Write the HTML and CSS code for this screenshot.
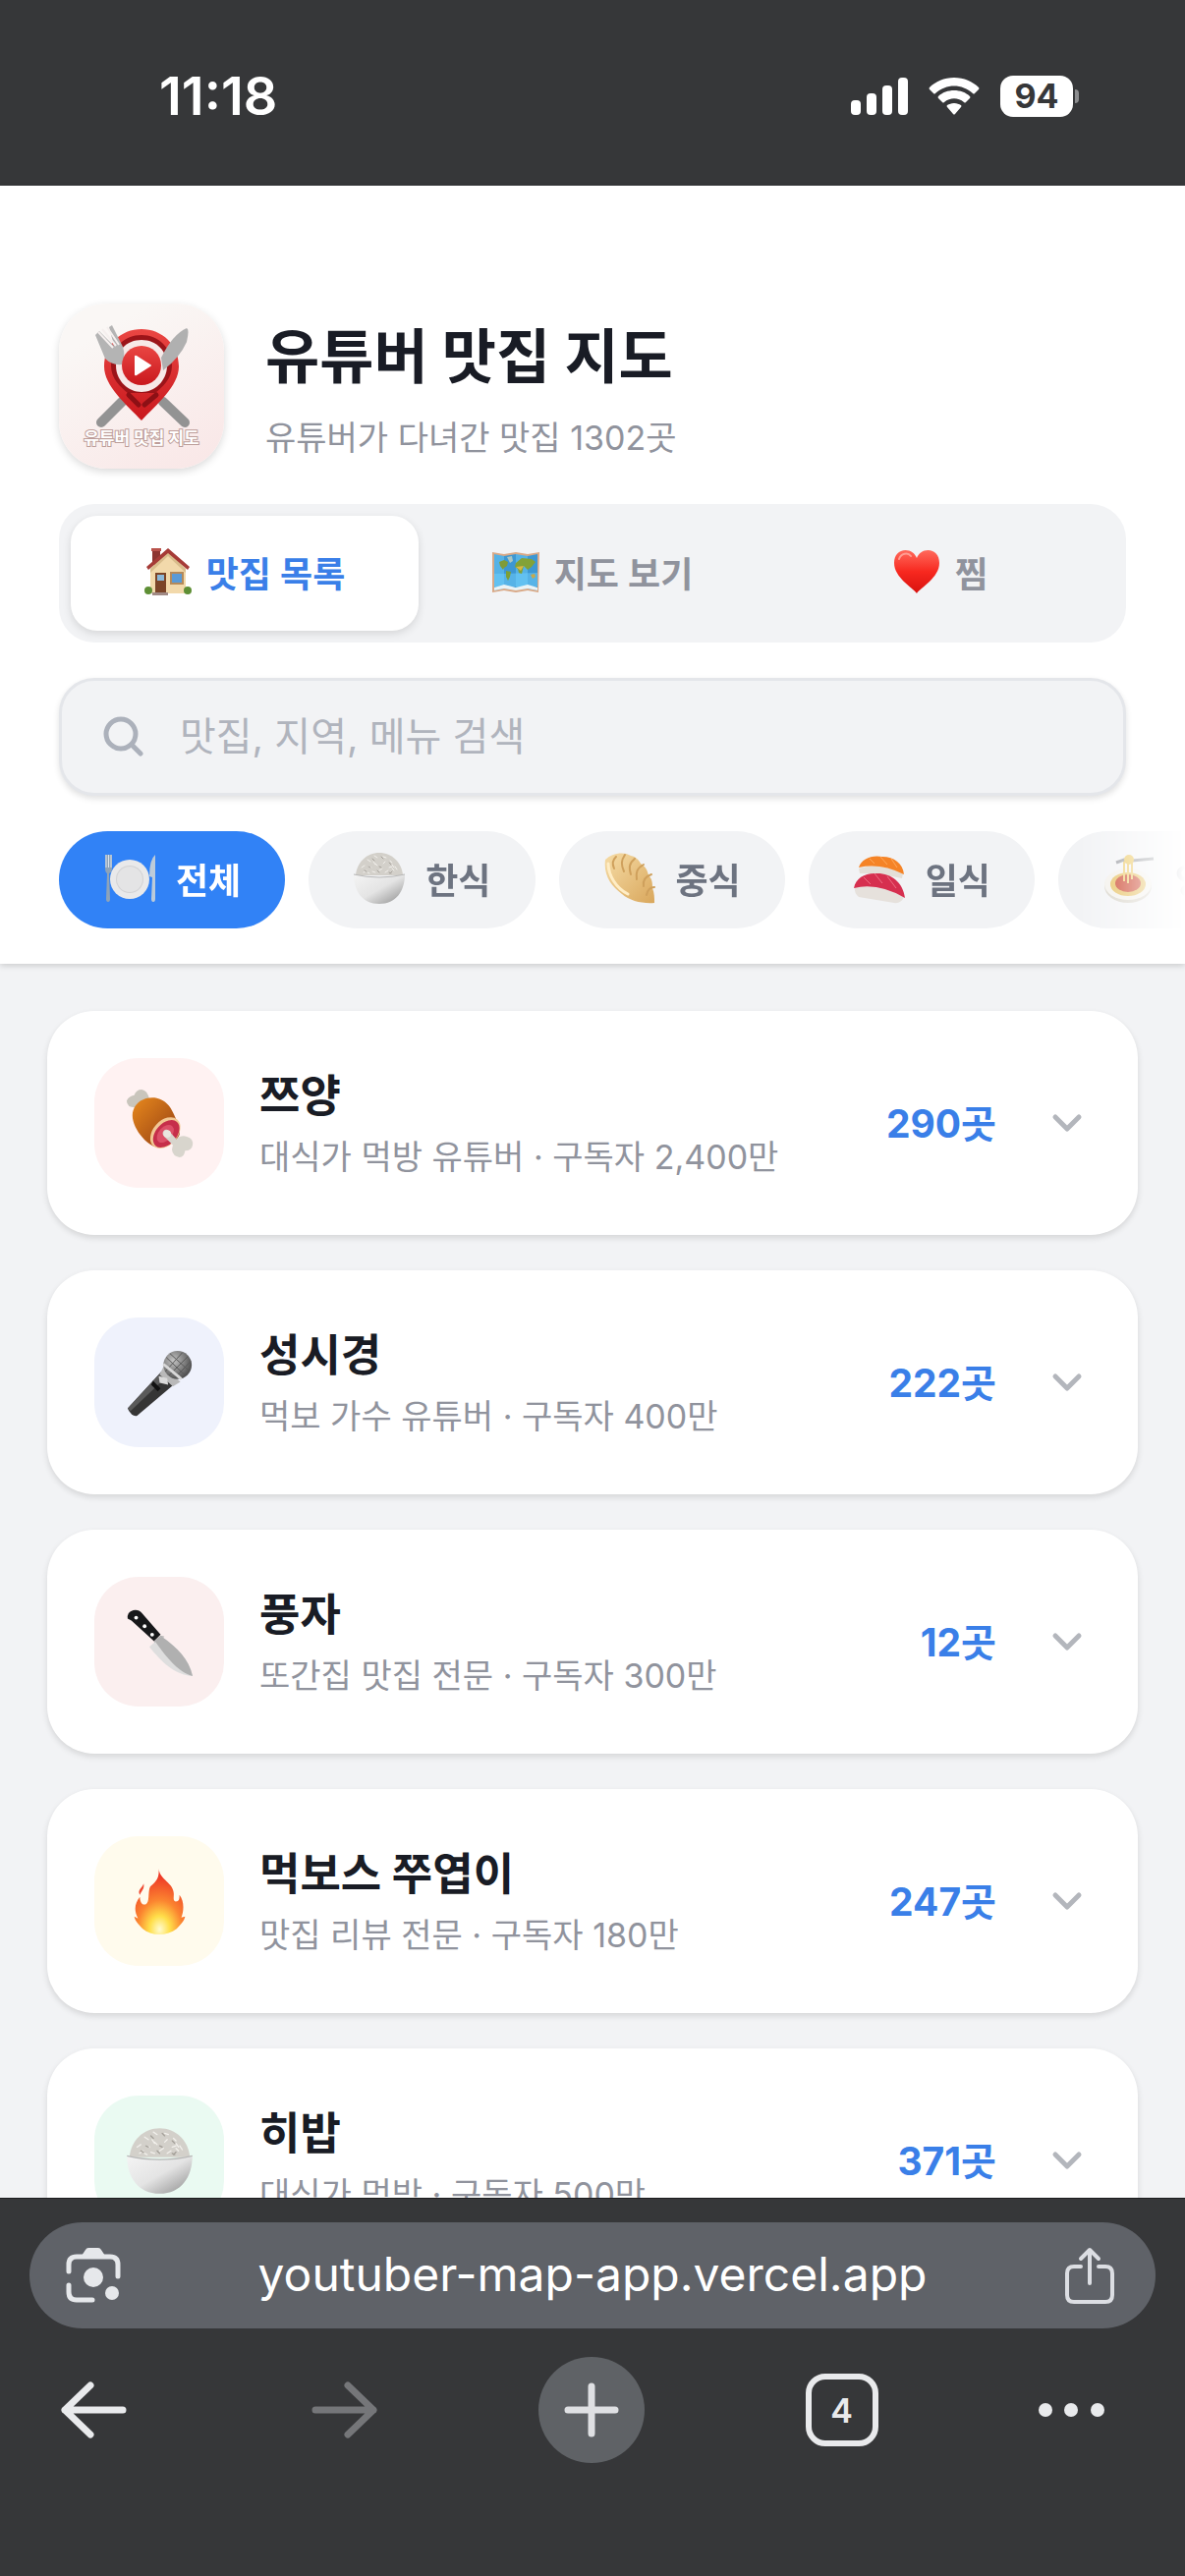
FILE: index.html
```html
<!DOCTYPE html>
<html lang="ko">
<head>
    <meta charset="UTF-8">
    <meta name="viewport" content="width=device-width, initial-scale=1.0">
    <title>유튜버 맛집 지도</title>
    <link rel="stylesheet" href="styles.css">
</head>
<body>
    <!-- shared pictures -->
    <svg class="sprite" aria-hidden="true">
        <defs>
            <linearGradient id="g-bowl" x1="0" y1="0" x2="1" y2="1">
                <stop offset="0" stop-color="#f4f4f4"/><stop offset=".5" stop-color="#e4e4e4"/><stop offset="1" stop-color="#8d8d8d"/>
            </linearGradient>
            <linearGradient id="g-dough" x1="0" y1="0" x2="1" y2="1">
                <stop offset="0" stop-color="#f6dca6"/><stop offset="1" stop-color="#d9a75c"/>
            </linearGradient>
            <linearGradient id="g-meat" x1="0" y1="0" x2="1" y2="1">
                <stop offset="0" stop-color="#e8891d"/><stop offset="1" stop-color="#8f3a12"/>
            </linearGradient>
            <linearGradient id="g-heart" x1="0" y1="0" x2="0" y2="1">
                <stop offset="0" stop-color="#ff6a5c"/><stop offset=".5" stop-color="#f7281f"/><stop offset="1" stop-color="#d8120f"/>
            </linearGradient>
            <radialGradient id="g-fire" cx=".5" cy=".92" r=".8">
                <stop offset="0" stop-color="#fffbd0"/><stop offset=".25" stop-color="#ffdf4a"/><stop offset=".55" stop-color="#fb8530"/><stop offset="1" stop-color="#ee3a27"/>
            </radialGradient>
            <radialGradient id="g-mic" cx=".35" cy=".35" r=".7">
                <stop offset="0" stop-color="#c4c4c4"/><stop offset="1" stop-color="#4d4d4d"/>
            </radialGradient>
            <linearGradient id="g-pin" x1="0" y1="0" x2="0" y2="1">
                <stop offset="0" stop-color="#ea4643"/><stop offset="1" stop-color="#c9181d"/>
            </linearGradient>
        </defs>
        <symbol id="house" viewBox="0 0 48 48">
            <path d="M8 1h8v16H8z" fill="#8d3531"/>
            <path d="M24 3 42 21v25H6V21z" fill="#f2d9ab"/>
            <path d="M24 3 42 21v4L24 8 6 25v-4z" fill="#d9bd8c"/>
            <path d="M24 0 2 19l2 3L24 5l20 17 2-3z" fill="#a63b37"/>
            <path d="M7 0h10v3H7z" fill="#b9524b"/>
            <path d="M11 25h11v21H11z" fill="#7b4427"/>
            <path d="M13 27h7v6h-7z" fill="#8db8d8"/>
            <path d="M26 24h14v13H26z" fill="#b58a5a"/>
            <path d="M28 26h10v9H28z" fill="#5a9ad6"/>
            <circle cx="4" cy="43" r="4" fill="#5e8f35"/><circle cx="44" cy="43" r="4" fill="#5e8f35"/>
            <path d="M8 45h16v3H8z" fill="#a08a85"/>
        </symbol>
        <symbol id="map" viewBox="0 0 48 48">
            <path d="m0 4 12 2 12-2 12 2 12-2-1 41-11-2-12 2-12-2-12 2z" fill="#d9a987"/>
            <path d="m2 6 10 2v33l-10 2z" fill="#55b2e6"/><path d="m12 8 12-2v36l-12-1z" fill="#3d97d3"/>
            <path d="m24 6 12 2v33l-12 1z" fill="#55b2e6"/><path d="m36 8 10-2v37l-10-2z" fill="#3d97d3"/>
            <path d="m2 26 44-1v14H2z" fill="#6fd0fb" opacity=".5"/>
            <path d="m7 14 5-2 4 2-1 4-3 2-1 2-3-4z" fill="#7f9b3a"/>
            <path d="m15 9 5-1 1 5-3 2z" fill="#a9c6c4"/>
            <path d="m14 23 5 1-1 5-2 4-2-4z" fill="#7e9f35"/>
            <path d="m24 15 6-5 10 1 4 3-4 5-4 3-4-4-2 8-3-1-1-4-3-2z" fill="#82a238"/>
            <path d="m24 19 8-1-3 5z" fill="#d9b743"/>
            <path d="m39 27 4-1 1 3-3 2z" fill="#c8a94a"/>
            <path d="m2 40 10-3 12 3 12-3 10 3v3l-10-2-12 2-12-2-10 2z" fill="#e9f3f6"/>
        </symbol>
        <symbol id="heart" viewBox="0 0 48 48">
            <path d="M24 46C20 40 1 30 1 15 1 7 6 2 12.500 2 18 2 22 5 24 10 26 5 30 2 35.500 2 42 2 47 7 47 15c0 15-19 25-23 31z" fill="url(#g-heart)"/>
            <path d="M6 11c2-6 9-7 12-3" fill="none" stroke="#ff9d92" stroke-width="2" stroke-linecap="round"/>
        </symbol>
        <symbol id="plate" viewBox="0 0 54 54">
            <path d="M2 3v14q0 4 2 5l-1 26q0 3 2 3t2-3L6 22q3-1 3-5V3" fill="#8ea3b8"/>
            <path d="M3 3v13M5.500 3v13M8 3v13" stroke="#dbe4ee"/>
            <circle cx="27" cy="28" r="20" fill="#e9e9ea"/>
            <circle cx="27" cy="28" r="14" fill="#d2d2d4"/><circle cx="27" cy="28" r="13" fill="#e4e4e5"/>
            <path d="M53 3q-6 5-6 22l3 1-1 22q0 3 2 3t2-3z" fill="#bccbd9"/>
        </symbol>
        <symbol id="rice" viewBox="0 0 54 54">
            <path d="M3 24C4 11 14 1 27 1s23 10 24 23z" fill="#d3d0ca"/>
            <path d="m9 16 3-2m3-6 3 2m4-6 3 2m6-1 3 1m4 3 2 2m3 4 2 3M16 15l3 1m4-4 2 2m6-2 2-2m4 6 3-1m-29 6 3-2m6 1 3 1m4-2 3-2m3 4 3-2m4-2 2 2m-21-9 2 3m-8 8 2 1m23-9 2 3" stroke="#f2f0ec" stroke-linecap="round"/>
            <path d="m12 19 2 1m6-13 2 2m7-4 2 2m6 4 2 2m-14 6 2 2m10 0 2 1m-23-7 2 1m9-1 2 1m9 6 2-2" stroke="#a39f98" stroke-linecap="round"/>
            <path d="M1 23q26 6 52 0c0 17-9 30-26 30S1 40 1 23z" fill="url(#g-bowl)"/>
            <path d="M1 23q26 6 52 0" fill="none" stroke="#b7b7b7"/>
        </symbol>
        <symbol id="dumpling" viewBox="0 0 54 54">
            <path d="M2 8C8 2 20-1 28 4c5 1 8 4 10 8 5 3 7 7 8 12 4 4 4 8 4 13 2 5 2 10 2 15-12 1-25-2-33-9C8 35 0 24 2 8z" fill="url(#g-dough)"/>
            <path d="M13 5c-4 4-4 7-2 12m11-14c-4 6-4 10-1 17m11-13c-6 5-6 9-4 16m13-10c-7 4-8 8-7 15m15-5c-6 2-9 6-8 12m11 1c-5 0-7 3-8 8" fill="none" stroke="#cfa05c" stroke-width="2" stroke-linecap="round"/>
            <path d="M5 12c0 12 8 25 20 31" fill="none" stroke="#ffedc5" stroke-width="3" stroke-linecap="round"/>
        </symbol>
        <symbol id="sushi" viewBox="0 0 54 54">
            <path d="M6 17q20-7 45 5l-1 5q-23-5-43-5z" fill="#e4dfd8"/>
            <path d="M6 16C9 7 19 3 30 5c12 0 21 7 22 18Q28 11 6 16z" fill="#f58326"/>
            <path d="m17 7 5 5m6-7 7 8m4-6 6 9" stroke="#ffa95a"/>
            <path d="M2 36q22-4 50 10-3 7-10 6L6 46q-5-4-4-10z" fill="#e6e1dc"/>
            <path d="M1 37c2-11 12-16 24-15 14 0 26 9 28 25Q25 31 1 37z" fill="#d62f4f"/>
            <path d="m11 26 7 7m4-11 8 10m5-7 9 12" stroke="#ee6f84"/>
        </symbol>
        <symbol id="pasta" viewBox="0 0 54 54">
            <ellipse cx="26" cy="35" rx="24" ry="17" fill="#d7d3c8"/>
            <ellipse cx="26" cy="33" rx="24" ry="16" fill="#f2f0ea"/>
            <ellipse cx="26" cy="33" rx="18" ry="12" fill="#e5bd59"/>
            <ellipse cx="26" cy="32" rx="13" ry="9" fill="#c83a22"/>
            <path d="M22 8v22m4-22v24m4-24v20" stroke="#ecc968" stroke-width="2"/>
            <path d="m14 11 8-3 8 1 22-2" fill="none" stroke="#96999e" stroke-width="3"/>
            <circle cx="27" cy="8" r="5" fill="#ebc75f"/>
        </symbol>
        <symbol id="meat" viewBox="0 0 72 72">
            <path d="m10 19 12 4 3-13q-2-9-8-10-6 0-8 6-6 1-8 6 0 7 9 7z" fill="#c9c5bc"/>
            <path d="M8 22C11 12 22 7 33 9c9 2 14 8 18 17 3 7 7 13 6 22-3 8-15 14-25 13C20 58 3 36 8 22z" fill="url(#g-meat)"/>
            <ellipse cx="42" cy="46" rx="19" ry="13" transform="rotate(-48 42 46)" fill="#f2c894"/>
            <ellipse cx="43" cy="47" rx="17" ry="11" transform="rotate(-48 43 47)" fill="#c62f4a"/>
            <ellipse cx="42" cy="47" rx="11" ry="7" transform="rotate(-48 42 47)" fill="#dc5068"/>
            <path d="M40 44q3-3 6 0l8 9q4-5 11-3 7 2 6 9-1 6-8 6-1 7-6 7-7-1-8-8l1-5-9-9q-3-3-1-6z" fill="#d8d5cd"/>
            <circle cx="44" cy="47" r="4" fill="#eae7e0"/>
        </symbol>
        <symbol id="mic" viewBox="0 0 72 72">
            <path d="m38 24 14 13L12 71q-3 1-6-2t-4-6z" fill="#353535"/>
            <path d="M38 24 2 63l3 3 39-37z" fill="#5a5a5a"/>
            <path d="m36 27 4-8 18 16-8 5z" fill="#b9b9b9"/>
            <circle cx="55" cy="17" r="15" fill="url(#g-mic)"/>
            <path d="m43 9 20 19M47 5l20 18M41 15l17 16M42 24 60 4M46 28 66 8M52 31l17-18" stroke="#575757" fill="none"/>
            <path d="m40 16 19 16" stroke="#d8d8d8" stroke-width="3"/>
            <path d="m35 29 9 2 1 7-9-2z" fill="#dadada"/><path d="m29 34 8 8-3 3-7-7z" fill="#111"/>
        </symbol>
        <symbol id="knife" viewBox="0 0 72 72">
            <path d="M2 11Q1 4 8 2q6-1 9 3l20 23-7 7L6 13z" fill="#17181a"/>
            <circle cx="11" cy="10" r="2" fill="#fff"/><circle cx="20" cy="19" r="2" fill="#fff"/><circle cx="28" cy="28" r="2" fill="#fff"/>
            <path d="m30 35 7-6 4 1-10 10z" fill="#b0b0b0"/>
            <path d="m25 41 13-11C55 42 67 54 71 72 52 71 38 57 25 41z" fill="#dedede"/>
            <path d="M31 35 38 30C55 42 67 54 71 72 54 67 42 50 31 35z" fill="#b0b0b0"/>
        </symbol>
        <symbol id="fire" viewBox="0 0 72 72">
            <path d="M35 1c1 12 16 15 16 27 0 4-1 7 2 8 4 0 4-3 4-7 5 6 5 16 2 24l4-1c-1 5-5 9-9 13-10 8-27 8-36 0-4-4-8-8-9-13l4 2C8 45 10 37 15 31c0 5 2 9 6 8 5-2 2-13 5-19 4-4 10-7 9-19z" fill="url(#g-fire)"/>
            <path d="M19 17c1 6-2 7-4 12-3-5 2-7 4-12z" fill="#ef4a32"/>
        </symbol>
        <symbol id="chevron" viewBox="0 0 48 48">
            <path d="m12 18 12 12 12-12" fill="none" stroke="#b3b6bc" stroke-width="5" stroke-linecap="round" stroke-linejoin="round"/>
        </symbol>
    </svg>

    <div class="status-bar">
        <span class="time">11:18</span>
        <div class="status-icons">
            <svg width="58" height="38" viewBox="0 0 58 38" fill="#fff"><rect y="23" width="10" height="15" rx="4"/><rect x="16" y="16" width="10" height="22" rx="4"/><rect x="32" y="8" width="10" height="30" rx="4"/><rect x="48" width="10" height="38" rx="4"/></svg>
            <svg width="52" height="38" viewBox="0 0 52 38" fill="#fff"><path d="M26 0C16 0 7 4 1 10q-1 1 0 2l4 4q1 1 2 0c11-10 27-10 38 0q1 1 2 0l4-4q1-1 0-2C45 4 36 0 26 0z"/><path d="M26 13c-6 0-12 2-16 6q-1 1 0 2l4 4q1 1 2 0c6-5 14-5 20 0q1 1 2 0l4-4q1-1 0-2c-4-4-10-6-16-6z"/><path d="M26 26c-3 0-5 1-7 2q-1 1 0 2l6 7q1 1 2 0l6-7q1-1 0-2c-2-1-4-2-7-2z"/></svg>
            <span class="battery">94</span>
        </div>
    </div>

    <header class="header">
        <div class="brand">
            <svg class="logo" viewBox="0 0 168 168" role="img" aria-label="유튜버 맛집 지도 로고">
                <path d="M43 121 64 100M128 121 106 100" stroke="#939393" stroke-width="10" stroke-linecap="round"/>
                <path d="M84 26c-21 0-38 16-38 38 0 20 23 39 38 55 15-16 38-35 38-55 0-22-17-38-38-38z" fill="url(#g-pin)"/>
                <path d="M84 32c-17 0-31 13-31 31 0 14 10 22 17 28h28c7-6 17-14 17-28 0-18-14-31-31-31z" fill="#9c1419"/>
                <path d="M84 37c-15 0-26 11-26 26 0 16 13 27 26 27s26-11 26-27c0-15-11-26-26-26z" fill="#f7e9e8"/>
                <path d="m71 93 10 10m6 0 12-10" stroke="#8d1015" stroke-width="5" stroke-linecap="round"/>
                <path d="m37 32 4-4 15 15-5-19 3-2 11 22q3 9-1 18-10 1-17-6z" fill="#b4b4b4"/>
                <path d="m40 29 15 16m-11-19 14 17m-9-19 12 18" stroke="#f5efee" stroke-width="2"/>
                <path d="M130 25q3 1 0 14-7 16-24 29l-2-13q12-24 26-30z" fill="#b0b0b0"/>
                <circle cx="84" cy="63" r="20" fill="url(#g-pin)"/>
                <path d="M77 54v18q0 2 2 1l14-9q2-1 0-2l-14-9q-2-1-2 1z" fill="#fff"/>
                <text x="84" y="143" text-anchor="middle" class="logo-text">유튜버 맛집 지도</text>
            </svg>
            <div class="brand-text">
                <h1>유튜버 맛집 지도</h1>
                <p>유튜버가 다녀간 맛집 1302곳</p>
            </div>
        </div>

        <nav class="tabs">
            <button class="tab active"><svg class="tab-icon"><use href="#house"/></svg>맛집 목록</button>
            <button class="tab"><svg class="tab-icon"><use href="#map"/></svg>지도 보기</button>
            <button class="tab"><svg class="tab-icon"><use href="#heart"/></svg>찜</button>
        </nav>

        <label class="search">
            <svg width="42" height="42" viewBox="0 0 42 42" fill="none" stroke="#acb1bb" stroke-width="5" stroke-linecap="round"><circle cx="18" cy="18" r="15"/><path d="m29 29 9 9"/></svg>
            <input type="search" placeholder="맛집, 지역, 메뉴 검색" aria-label="맛집, 지역, 메뉴 검색">
        </label>

        <div class="chips">
            <button class="chip active"><svg class="chip-icon"><use href="#plate"/></svg>전체</button>
            <button class="chip"><svg class="chip-icon"><use href="#rice"/></svg>한식</button>
            <button class="chip"><svg class="chip-icon"><use href="#dumpling"/></svg>중식</button>
            <button class="chip"><svg class="chip-icon"><use href="#sushi"/></svg>일식</button>
            <button class="chip"><svg class="chip-icon"><use href="#pasta"/></svg>양식</button>
        </div>
    </header>

    <main class="list">
        <button class="card">
            <span class="avatar pink"><svg><use href="#meat"/></svg></span>
            <span class="info"><strong>쯔양</strong><small>대식가 먹방 유튜버 · 구독자 2,400만</small></span>
            <span class="count">290곳</span>
            <svg class="chevron"><use href="#chevron"/></svg>
        </button>
        <button class="card">
            <span class="avatar blue"><svg><use href="#mic"/></svg></span>
            <span class="info"><strong>성시경</strong><small>먹보 가수 유튜버 · 구독자 400만</small></span>
            <span class="count">222곳</span>
            <svg class="chevron"><use href="#chevron"/></svg>
        </button>
        <button class="card">
            <span class="avatar red"><svg><use href="#knife"/></svg></span>
            <span class="info"><strong>풍자</strong><small>또간집 맛집 전문 · 구독자 300만</small></span>
            <span class="count">12곳</span>
            <svg class="chevron"><use href="#chevron"/></svg>
        </button>
        <button class="card">
            <span class="avatar yellow"><svg><use href="#fire"/></svg></span>
            <span class="info"><strong>먹보스 쭈엽이</strong><small>맛집 리뷰 전문 · 구독자 180만</small></span>
            <span class="count">247곳</span>
            <svg class="chevron"><use href="#chevron"/></svg>
        </button>
        <button class="card">
            <span class="avatar green"><svg><use href="#rice"/></svg></span>
            <span class="info"><strong>히밥</strong><small>대식가 먹방 · 구독자 500만</small></span>
            <span class="count">371곳</span>
            <svg class="chevron"><use href="#chevron"/></svg>
        </button>
    </main>

    <footer class="browser-bar">
        <div class="address">
            <button aria-label="이미지 검색">
                <svg width="58" height="58" viewBox="0 0 58 58" fill="none" stroke="#e6e8eb" stroke-width="5" stroke-linecap="round"><path d="M4 25v-7q0-8 8-8h34q8 0 8 8v12M4 39v7q0 8 8 8h16"/><path d="m17 9 4-6q1-2 3-2h10q2 0 3 2l4 6z" fill="#e6e8eb" stroke="none"/><circle cx="29" cy="31" r="10" fill="#e6e8eb" stroke="none"/><circle cx="48" cy="47" r="7" fill="#e6e8eb" stroke="none"/></svg>
            </button>
            <a href="#">youtuber-map-app.vercel.app</a>
            <button aria-label="공유">
                <svg width="58" height="58" viewBox="0 0 58 58" fill="none" stroke="#dcdee3" stroke-width="4" stroke-linecap="round" stroke-linejoin="round"><path d="M18 20h-7q-7 0-7 7v22q0 7 7 7h32q7 0 7-7V27q0-7-7-7h-7M27 37V4M18 12l9-9 9 9"/></svg>
            </button>
        </div>
        <nav class="toolbar">
            <button class="back" aria-label="뒤로"><svg width="68" height="58" viewBox="0 0 68 58" fill="none" stroke="#e9eaec" stroke-width="7" stroke-linecap="round" stroke-linejoin="round"><path d="M31 4 5 29l26 25M5 29h59"/></svg></button>
            <button aria-label="앞으로" disabled><svg width="68" height="58" viewBox="0 0 68 58" fill="none" stroke="#757679" stroke-width="7" stroke-linecap="round" stroke-linejoin="round"><path d="m37 4 26 25-26 25M63 29H4"/></svg></button>
            <button class="new-tab" aria-label="새 탭"><svg width="56" height="56" viewBox="0 0 56 56" stroke="#dfe0e3" stroke-width="7" stroke-linecap="round"><path d="M28 4v48M4 28h48"/></svg></button>
            <button class="tab-count" aria-label="탭 4개">4</button>
            <button aria-label="더보기"><svg width="68" height="16" viewBox="0 0 68 16" fill="#e9eaec"><circle cx="7" cy="8" r="7"/><circle cx="33" cy="8" r="7"/><circle cx="60" cy="8" r="7"/></svg></button>
        </nav>
    </footer>
</body>
</html>
```
FILE: styles.css
```css
* {
    box-sizing: border-box;
}
body {
    font-family: Inter, "Noto Sans CJK KR", sans-serif;
    background-color: #f2f3f5;
    color: #191c25;
    margin: 0;
    display: flex;
    flex-direction: column;
    height: 100vh;
    overflow: hidden;
}
button {
    font-family: inherit;
    color: inherit;
    background: none;
    border: none;
    padding: 0;
    display: flex;
    align-items: center;
    justify-content: center;
    cursor: pointer;
}
svg {
    display: block;
    flex-shrink: 0;
}
.sprite {
    position: absolute;
    width: 0;
    height: 0;
}

/* phone status bar */
.status-bar {
    background-color: #363739;
    color: #fff;
    display: flex;
    justify-content: space-between;
    align-items: center;
    padding: 63px 114px 57px 162px;
    flex-shrink: 0;
}
.time {
    font-size: 54px;
    font-weight: 600;
    line-height: 69px;
}
.status-icons {
    display: flex;
    align-items: center;
    gap: 21px;
}
.battery {
    position: relative;
    width: 74px;
    height: 42px;
    border-radius: 13px;
    background-color: #fff;
    color: #363739;
    font-size: 34px;
    font-weight: 700;
    line-height: 42px;
    text-align: center;
}
.battery::after {
    content: "";
    position: absolute;
    right: -6px;
    top: 14px;
    width: 4px;
    height: 14px;
    border-radius: 0 4px 4px 0;
    background-color: #8c8d8f;
}

/* header */
.header {
    background-color: #fff;
    padding: 120px 60px 36px;
    display: flex;
    flex-direction: column;
    gap: 36px;
    box-shadow: 0 2px 6px rgba(0, 0, 0, 0.16);
    position: relative;
    flex-shrink: 0;
}
.brand {
    display: flex;
    align-items: center;
    gap: 42px;
}
.logo {
    width: 168px;
    height: 168px;
    border-radius: 48px;
    background: linear-gradient(150deg, #faf7f5 20%, #f9e6e6);
    box-shadow: 0 3px 9px rgba(0, 0, 0, 0.15);
}
.logo-text {
    font-size: 17px;
    font-weight: 700;
    fill: #fff;
    stroke: #bd9d99;
    stroke-width: 2px;
    paint-order: stroke;
}
.brand-text {
    padding-top: 6px;
}
.brand-text h1 {
    margin: 0;
    font-size: 60px;
    font-weight: 700;
    line-height: 84px;
}
.brand-text p {
    margin: 15px 0 0;
    font-size: 34px;
    line-height: 52px;
    color: #90939d;
}
.tabs {
    display: flex;
    padding: 12px;
    border-radius: 36px;
    background-color: #f2f3f5;
}
.tab {
    flex: 1;
    gap: 15px;
    height: 117px;
    padding-bottom: 4px;
    border-radius: 27px;
    font-size: 36px;
    font-weight: 600;
    color: #90939d;
}
.tab.active {
    background-color: #fff;
    color: #3a7fe8;
    box-shadow: 0 3px 9px rgba(0, 0, 0, 0.12);
}
.tab-icon {
    width: 48px;
    height: 48px;
}
.search {
    display: flex;
    align-items: center;
    gap: 36px;
    height: 120px;
    padding: 0 42px;
    border: 3px solid #e4e6ea;
    border-radius: 36px;
    background-color: #f2f3f5;
    box-shadow: 0 3px 6px rgba(0, 0, 0, 0.12);
}
.search input {
    flex: 1;
    border: none;
    outline: none;
    padding: 0;
    background: none;
    font-family: inherit;
    font-size: 40px;
    line-height: 60px;
    color: #191c25;
}
.search input::placeholder {
    color: #b0b4bd;
}
.chips {
    display: flex;
    gap: 24px;
    margin-right: -60px;
    overflow: hidden;
    -webkit-mask-image: linear-gradient(to left, transparent, #000 108px);
    mask-image: linear-gradient(to left, transparent, #000 108px);
}
.chip {
    flex-shrink: 0;
    gap: 20px;
    height: 99px;
    padding: 0 45px 4px;
    border-radius: 50px;
    background-color: #f2f3f5;
    font-size: 36px;
    font-weight: 700;
    color: #6d7380;
}
.chip.active {
    background-color: #3182f6;
    color: #fff;
}
.chip-icon {
    width: 54px;
    height: 54px;
}

/* youtuber list */
.list {
    flex: 1;
    min-height: 0;
    overflow: hidden;
    padding: 48px;
    display: flex;
    flex-direction: column;
    gap: 36px;
}
.card {
    flex-shrink: 0;
    width: 100%;
    padding: 48px;
    border-radius: 48px;
    background-color: #fff;
    box-shadow: 0 3px 6px rgba(0, 0, 0, 0.12);
    text-align: left;
}
.avatar {
    width: 132px;
    height: 132px;
    border-radius: 45px;
    display: flex;
    align-items: center;
    justify-content: center;
    flex-shrink: 0;
}
.avatar svg {
    width: 69px;
    height: 69px;
}
.pink { background-color: #fff2f2; }
.blue { background-color: #eff2fc; }
.red { background-color: #fbefef; }
.yellow { background-color: #fffbed; }
.green { background-color: #eafaf2; }
.info {
    flex: 1;
    margin-left: 36px;
    padding-top: 4px;
    display: flex;
    flex-direction: column;
    gap: 6px;
}
.info strong {
    font-size: 45px;
    font-weight: 700;
    line-height: 60px;
}
.info small {
    font-size: 34px;
    line-height: 52px;
    color: #90939d;
}
.count {
    padding-bottom: 4px;
    font-size: 39px;
    font-weight: 700;
    color: #3a7fe8;
}
.chevron {
    width: 48px;
    height: 48px;
    margin-left: 48px;
}

/* browser controls */
.browser-bar {
    background-color: #363739;
    border-top: 1px solid #1c1d1f;
    padding: 24px 30px 115px;
    flex-shrink: 0;
}
.address {
    display: flex;
    align-items: center;
    justify-content: space-between;
    height: 108px;
    padding: 0 36px;
    border-radius: 54px;
    background-color: #5f6268;
}
.address a {
    padding-bottom: 3px;
    font-size: 48px;
    color: #fff;
    text-decoration: none;
}
.toolbar {
    display: flex;
    align-items: center;
    justify-content: space-between;
    padding: 0 51px 0 31px;
    margin-top: 29px;
}
.toolbar .back {
    margin-right: 24px;
}
.new-tab {
    width: 108px;
    height: 108px;
    border-radius: 50%;
    background-color: #5f6266;
}
.tab-count {
    width: 74px;
    height: 74px;
    border: 6px solid #e9eaec;
    border-radius: 20px;
    color: #e9eaec;
    font-size: 34px;
    font-weight: 600;
}
```
